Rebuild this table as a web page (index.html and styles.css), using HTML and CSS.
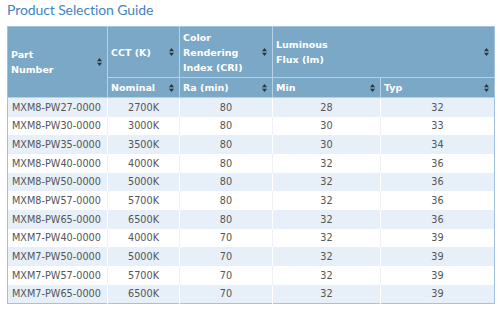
FILE: index.html
```html
<!DOCTYPE html>
<html>
<head>
<meta charset="utf-8">
<link rel="stylesheet" href="styles.css">
</head>
<body>
<h1 class="title">Product Selection Guide</h1>
<table class="guide">
  <colgroup>
    <col class="c1"><col class="c2"><col class="c3"><col class="c4"><col class="c5">
  </colgroup>
  <thead>
    <tr class="h1row">
      <th rowspan="2"><div class="hc"><span>Part<br>Number</span><svg class="sort" viewBox="0 0 5 8"><path d="M2.5 0L5 3.3H0Z M2.5 8L5 4.7H0Z"/></svg></div></th>
      <th><div class="hc"><span>CCT (K)</span><svg class="sort" viewBox="0 0 5 8"><path d="M2.5 0L5 3.3H0Z M2.5 8L5 4.7H0Z"/></svg></div></th>
      <th><div class="hc"><span>Color<br>Rendering<br>Index (CRI)</span><svg class="sort" viewBox="0 0 5 8"><path d="M2.5 0L5 3.3H0Z M2.5 8L5 4.7H0Z"/></svg></div></th>
      <th colspan="2"><div class="hc"><span>Luminous<br>Flux (lm)</span><svg class="sort" viewBox="0 0 5 8"><path d="M2.5 0L5 3.3H0Z M2.5 8L5 4.7H0Z"/></svg></div></th>
    </tr>
    <tr class="h2row">
      <th><div class="hc"><span>Nominal</span><svg class="sort" viewBox="0 0 5 8"><path d="M2.5 0L5 3.3H0Z M2.5 8L5 4.7H0Z"/></svg></div></th>
      <th><div class="hc"><span>Ra (min)</span><svg class="sort" viewBox="0 0 5 8"><path d="M2.5 0L5 3.3H0Z M2.5 8L5 4.7H0Z"/></svg></div></th>
      <th><div class="hc"><span>Min</span><svg class="sort" viewBox="0 0 5 8"><path d="M2.5 0L5 3.3H0Z M2.5 8L5 4.7H0Z"/></svg></div></th>
      <th><div class="hc"><span>Typ</span><svg class="sort" viewBox="0 0 5 8"><path d="M2.5 0L5 3.3H0Z M2.5 8L5 4.7H0Z"/></svg></div></th>
    </tr>
  </thead>
  <tbody>
    <tr><td>MXM8-PW27-0000</td><td>2700K</td><td>80</td><td>28</td><td>32</td></tr>
    <tr><td>MXM8-PW30-0000</td><td>3000K</td><td>80</td><td>30</td><td>33</td></tr>
    <tr><td>MXM8-PW35-0000</td><td>3500K</td><td>80</td><td>30</td><td>34</td></tr>
    <tr><td>MXM8-PW40-0000</td><td>4000K</td><td>80</td><td>32</td><td>36</td></tr>
    <tr><td>MXM8-PW50-0000</td><td>5000K</td><td>80</td><td>32</td><td>36</td></tr>
    <tr><td>MXM8-PW57-0000</td><td>5700K</td><td>80</td><td>32</td><td>36</td></tr>
    <tr><td>MXM8-PW65-0000</td><td>6500K</td><td>80</td><td>32</td><td>36</td></tr>
    <tr><td>MXM7-PW40-0000</td><td>4000K</td><td>70</td><td>32</td><td>39</td></tr>
    <tr><td>MXM7-PW50-0000</td><td>5000K</td><td>70</td><td>32</td><td>39</td></tr>
    <tr><td>MXM7-PW57-0000</td><td>5700K</td><td>70</td><td>32</td><td>39</td></tr>
    <tr><td>MXM7-PW65-0000</td><td>6500K</td><td>70</td><td>32</td><td>39</td></tr>
  </tbody>
</table>
</body>
</html>
```

FILE: styles.css
```css
html, body {
  margin: 0;
  padding: 0;
  background: #fff;
}
body {
  font-family: "DejaVu Sans", Verdana, sans-serif;
}
.title {
  margin: 0;
  padding: 0 0 0 7px;
  height: 26px;
  font-family: Lato, "Noto Sans", sans-serif;
  font-weight: 400;
  font-size: 14px;
  letter-spacing: -0.1px;
  line-height: 20px;
  color: #3f84c4;
}
.guide {
  margin-left: 7px;
  border-collapse: collapse;
  table-layout: fixed;
  width: 487px;
  border: 1px solid #a3c3dc;
}
.c1 { width: 100px; }
.c2 { width: 72px; }
.c3 { width: 93px; }
.c4 { width: 108px; }
.c5 { width: 114px; }
.guide th {
  background: #7aa8c6;
  color: #fff;
  font-weight: bold;
  font-size: 9.5px;
  line-height: 15px;
  text-align: left;
  vertical-align: middle;
  border: 1px solid #b6d1e4;
  padding: 0 5px 0 3px;
}
.guide thead tr:first-child th { border-top: 0; }
.guide thead th:first-child { border-left: 0; }
.guide thead th:last-child { border-right: 0; }
.h1row { height: 51px; }
.h2row { height: 20px; }
.hc {
  display: flex;
  align-items: center;
  justify-content: space-between;
}
.sort {
  width: 5px;
  height: 8px;
  flex: none;
  fill: #2a3640;
}
.guide td {
  height: 18.67px;
  padding: 0 4px;
  font-size: 9.7px;
  color: #555;
  text-align: center;
  vertical-align: middle;
  border-left: 1px solid #fff;
  border-right: 1px solid #fff;
}
.guide td:first-child {
  text-align: left;
  border-left: 0;
}
.guide td:last-child { border-right: 0; }
.guide tbody tr:nth-child(odd) td { background: #e7eff8; }
.guide tbody tr:nth-child(even) td { background: #fff; border-color: #eef2f6; }
```
